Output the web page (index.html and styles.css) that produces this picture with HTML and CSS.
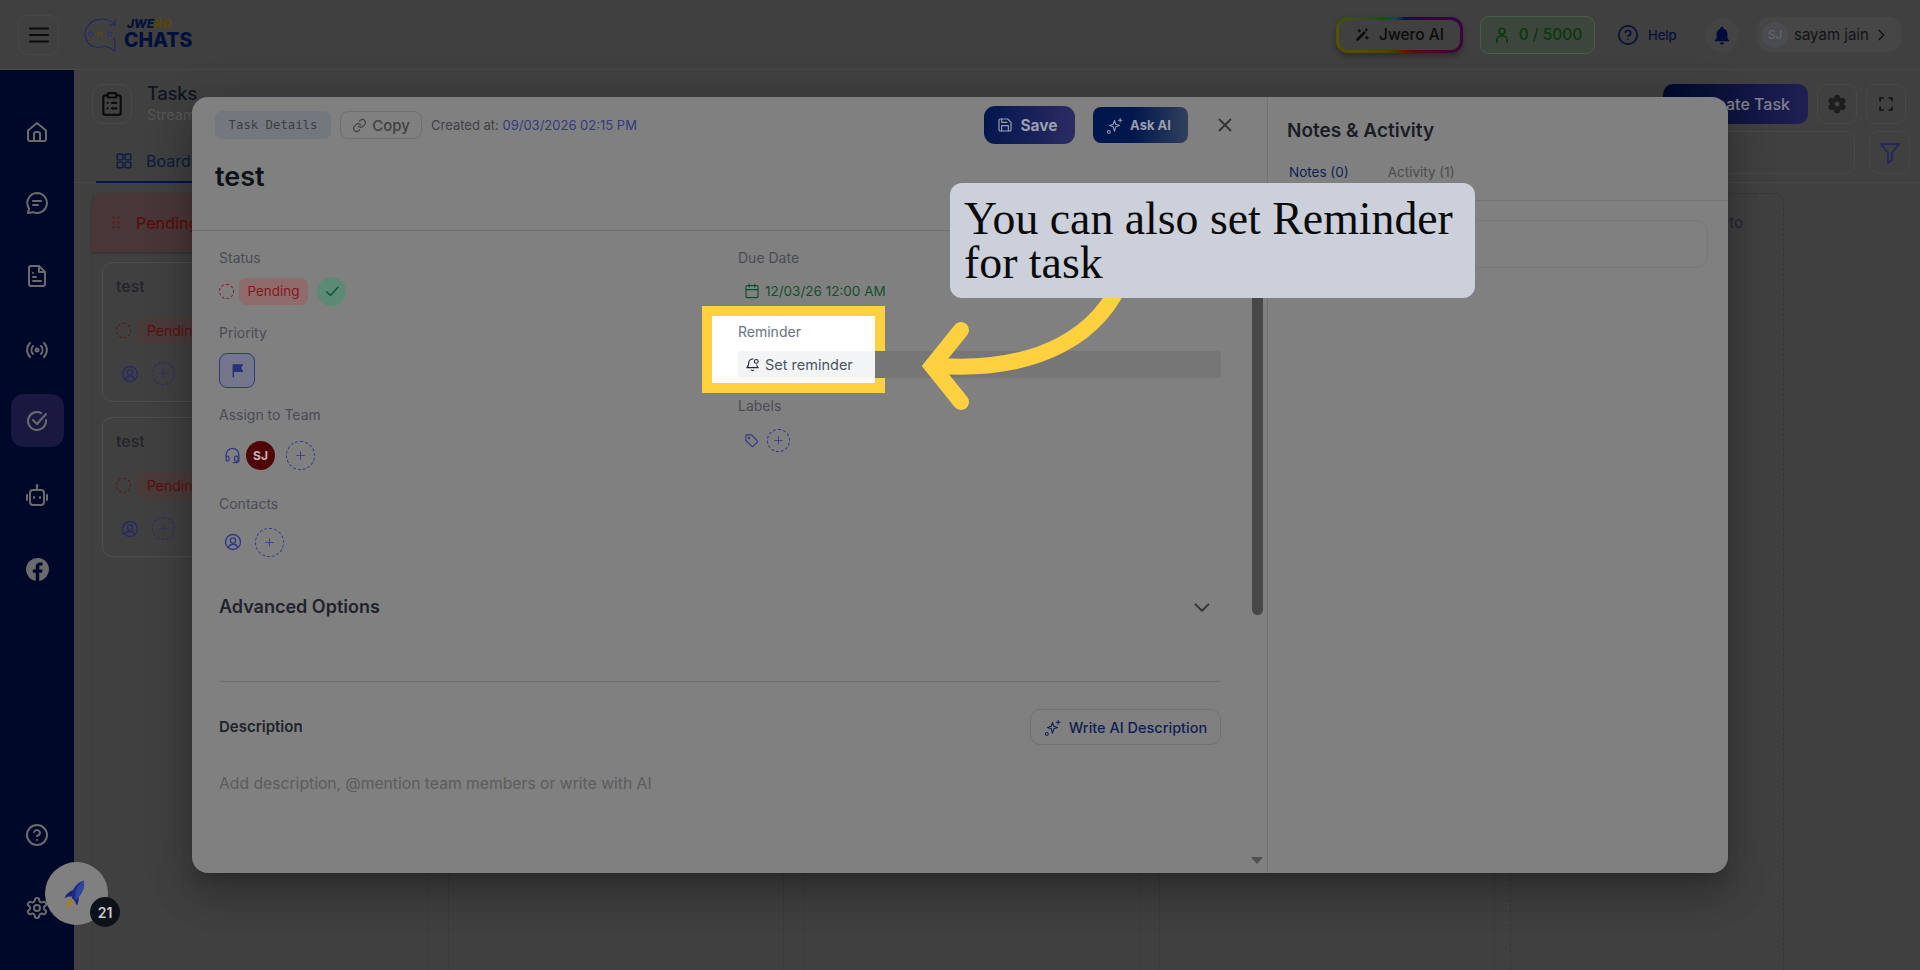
FILE: index.html
```html
<!DOCTYPE html>
<html lang="en">
<head>
<meta charset="utf-8">
<title>Tasks</title>
<link rel="stylesheet" href="styles.css">
</head>
<body>
<svg class="sprite" aria-hidden="true">
  <symbol id="i-sparkle" viewBox="0 0 24 24"><path d="M12 5l1.800 5.200L19 12l-5.200 1.800L12 20l-1.800-6.200L5 12l5.200-1.800z"/><path d="M20 2v5M17.500 4.500h5"/><circle cx="4" cy="21" r="2"/></symbol>
  <symbol id="i-person" viewBox="0 0 24 24"><circle cx="12" cy="12" r="10"/><circle cx="12" cy="10" r="3.500"/><path d="M6 19c1-3 3.500-4 6-4s5 1 6 4"/></symbol>
  <symbol id="i-plus" viewBox="0 0 24 24"><path d="M12 5v14M5 12h14"/></symbol>
  <symbol id="i-gear" viewBox="0 0 24 24"><path d="M12.220 2h-.44a2 2 0 0 0-2 2v.18a2 2 0 0 1-1 1.730l-.43.25a2 2 0 0 1-2 0l-.15-.08a2 2 0 0 0-2.730.73l-.22.38a2 2 0 0 0 .73 2.730l.15.1a2 2 0 0 1 1 1.720v.51a2 2 0 0 1-1 1.740l-.15.09a2 2 0 0 0-.73 2.730l.22.38a2 2 0 0 0 2.730.73l.15-.08a2 2 0 0 1 2 0l.43.25a2 2 0 0 1 1 1.730V20a2 2 0 0 0 2 2h.44a2 2 0 0 0 2-2v-.18a2 2 0 0 1 1-1.730l.43-.25a2 2 0 0 1 2 0l.15.08a2 2 0 0 0 2.730-.73l.22-.39a2 2 0 0 0-.73-2.730l-.15-.08a2 2 0 0 1-1-1.740v-.5a2 2 0 0 1 1-1.740l.15-.09a2 2 0 0 0 .73-2.730l-.22-.38a2 2 0 0 0-2.730-.73l-.15.08a2 2 0 0 1-2 0l-.43-.25a2 2 0 0 1-1-1.730V4a2 2 0 0 0-2-2z"/><circle cx="12" cy="12" r="3"/></symbol>
</svg>

<div class="app">
  <header class="topbar">
    <button class="menu-btn" aria-label="Menu">
      <svg class="icon icon-menu" viewBox="0 0 24 24"><path d="M3 5.500h18M3 12h18M3 18.500h18"/></svg>
    </button>
    <div class="logo">
      <svg class="logo-mark" viewBox="0 0 36 36"><path d="M33 7C29 2.500 23 .8 17 1.500 8 2 1 9 1 17c0 7 5 13 12 14 3 .4 7 0 10-1"/><path d="M33 1v6.500h-6.500"/><path d="M32 21c1 5 1 9 .5 14-2.500-2.500-5-4-9-4.500"/><circle cx="7" cy="17" r="2.200" class="dot-n"/><circle cx="17" cy="17" r="2.200" class="dot-g"/><circle cx="27" cy="17" r="2.200" class="dot-n"/></svg>
      <div class="logo-text">
        <span class="logo-top">JWE<span class="logo-gold">RO</span></span>
        <span class="logo-main">CHATS</span>
      </div>
    </div>
    <div class="top-actions">
      <button class="ai-btn">
        <svg class="icon icon-wand" viewBox="0 0 24 24"><path d="M4 20L15 9" class="thick"/><path d="M7 4v4M5 6h4M18 3v3M16.500 4.500h3M19 15v4M17 17h4"/></svg>
        Jwero AI
      </button>
      <div class="credits">
        <svg class="icon icon-user" viewBox="0 0 24 24"><circle cx="12" cy="7" r="4"/><path d="M5 22v-3a6 6 0 0 1 6-6h2a6 6 0 0 1 6 6v3"/></svg>
        0 / 5000
      </div>
      <div class="help">
        <svg class="icon icon-help" viewBox="0 0 24 24"><circle cx="12" cy="12" r="10"/><path d="M9.100 9a3 3 0 0 1 5.800 1c0 2-3 3-3 3"/><path d="M12 17h.01"/></svg>
        Help
      </div>
      <div class="bell-box">
        <svg class="icon-bell" viewBox="0 0 24 24"><path d="M12 2a2 2 0 0 0-2 2v.6C7 5.500 5.500 8 5.500 11v5L3.500 18.500v1h17v-1L18.500 16v-5c0-3-1.500-5.500-4.500-6.400V4a2 2 0 0 0-2-2z"/><path d="M9.500 21a2.500 2.500 0 0 0 5 0z"/></svg>
      </div>
      <div class="user-pill">
        <span class="user-avatar">SJ</span>
        <span class="user-name">sayam jain</span>
        <svg class="icon icon-chev" viewBox="0 0 24 24"><path d="M9 5l7 7-7 7"/></svg>
      </div>
    </div>
  </header>

  <div class="shell">
    <aside class="sidebar">
      <nav class="nav-main">
        <a class="nav-item"><svg class="icon nav-icon" viewBox="0 0 24 24"><path d="M3 10.500L12 3l9 7.500V19a2 2 0 0 1-2 2H5a2 2 0 0 1-2-2z"/><path d="M9 21v-7a2 2 0 0 1 2-2h2a2 2 0 0 1 2 2v7"/></svg></a>
        <a class="nav-item"><svg class="icon nav-icon" viewBox="0 0 24 24"><path d="M12 2a10 10 0 1 1-4 19.200L3 22l1-4.500A10 10 0 0 1 12 2z"/><path d="M8 10h8M8 14h5"/></svg></a>
        <a class="nav-item"><svg class="icon nav-icon" viewBox="0 0 24 24"><path d="M14 2H6a2 2 0 0 0-2 2v16a2 2 0 0 0 2 2h12a2 2 0 0 0 2-2V8z"/><path d="M14 2v6h6M8 13h3M8 17h8M8 9h0"/></svg></a>
        <a class="nav-item"><svg class="icon nav-icon" viewBox="0 0 24 24"><circle cx="12" cy="12" r="1.500"/><path d="M8 8a6 6 0 0 0 0 8M16 8a6 6 0 0 1 0 8M5 5a10 10 0 0 0 0 14M19 5a10 10 0 0 1 0 14"/></svg></a>
        <a class="nav-item nav-active"><svg class="icon nav-icon" viewBox="0 0 24 24"><path d="M21 11v1a9 9 0 1 1-5-8"/><path d="M8 11l4 4 9-10"/></svg></a>
        <a class="nav-item"><svg class="icon nav-icon" viewBox="0 0 24 24"><path d="M12 7V3"/><circle cx="12" cy="2.500" r=".5"/><rect x="5" y="7" width="14" height="15" rx="3"/><path d="M2 12v5M22 12v5M9 14v1M15 14v1"/></svg></a>
        <a class="nav-item"><svg class="nav-fb" viewBox="0 0 24 24"><path d="M24 12a12 12 0 1 0-13.900 11.900v-8.400H7.100V12h3V9.400c0-3 1.800-4.700 4.500-4.700 1.300 0 2.700.2 2.700.2v3h-1.500c-1.500 0-2 .9-2 1.900V12h3.400l-.5 3.500h-2.900v8.400A12 12 0 0 0 24 12z"/></svg></a>
      </nav>
      <nav class="nav-bottom">
        <a class="nav-item"><svg class="icon nav-icon" viewBox="0 0 24 24"><circle cx="12" cy="12" r="10"/><path d="M9.100 9a3 3 0 0 1 5.800 1c0 2-3 3-3 3"/><path d="M12 17h.01"/></svg></a>
        <a class="nav-item"><svg class="icon nav-icon" viewBox="0 0 24 24"><use href="#i-gear"/></svg></a>
      </nav>
    </aside>

    <main class="content">
      <div class="page-head">
        <div class="page-title-box">
          <span class="page-icon">
            <svg class="icon icon-clip" viewBox="0 0 24 24"><rect x="8" y="2" width="8" height="4" rx="1"/><path d="M16 4h2a2 2 0 0 1 2 2v14a2 2 0 0 1-2 2H6a2 2 0 0 1-2-2V6a2 2 0 0 1 2-2h2M12 11h4M12 16h4M8 11h.01M8 16h.01"/></svg>
          </span>
          <div class="page-title-text">
            <div class="page-title">Tasks</div>
            <div class="page-sub">Stream</div>
          </div>
        </div>
        <div class="page-actions">
          <button class="create-btn">Create Task</button>
          <span class="square-btn"><svg class="icon-solid-gear" viewBox="0 0 24 24"><path d="M12.220 2h-.44a2 2 0 0 0-2 2v.18a2 2 0 0 1-1 1.730l-.43.25a2 2 0 0 1-2 0l-.15-.08a2 2 0 0 0-2.730.73l-.22.38a2 2 0 0 0 .73 2.730l.15.1a2 2 0 0 1 1 1.720v.51a2 2 0 0 1-1 1.740l-.15.09a2 2 0 0 0-.73 2.730l.22.38a2 2 0 0 0 2.730.73l.15-.08a2 2 0 0 1 2 0l.43.25a2 2 0 0 1 1 1.730V20a2 2 0 0 0 2 2h.44a2 2 0 0 0 2-2v-.18a2 2 0 0 1 1-1.730l.43-.25a2 2 0 0 1 2 0l.15.08a2 2 0 0 0 2.730-.73l.22-.39a2 2 0 0 0-.73-2.730l-.15-.08a2 2 0 0 1-1-1.740v-.5a2 2 0 0 1 1-1.740l.15-.09a2 2 0 0 0 .73-2.730l-.22-.38a2 2 0 0 0-2.730-.73l-.15.08a2 2 0 0 1-2 0l-.43-.25a2 2 0 0 1-1-1.730V4a2 2 0 0 0-2-2z"/><circle class="gear-hole" cx="12" cy="12" r="3"/></svg></span>
          <span class="square-btn"><svg class="icon icon-full" viewBox="0 0 24 24"><path d="M4 8V4h4M16 4h4v4M20 16v4h-4M8 20H4v-4"/></svg></span>
        </div>
      </div>
      <div class="tabs-row">
        <div class="board-tab">
          <svg class="icon icon-grid" viewBox="0 0 24 24"><rect x="3" y="3" width="7.500" height="7.500" rx="1"/><rect x="13.500" y="3" width="7.500" height="7.500" rx="1"/><rect x="3" y="13.500" width="7.500" height="7.500" rx="1"/><rect x="13.500" y="13.500" width="7.500" height="7.500" rx="1"/></svg>
          Boards
        </div>
        <div class="tabs-right">
          <div class="search-box"></div>
          <span class="filter-btn"><svg class="icon icon-filter" viewBox="0 0 24 24"><path d="M3 3h18l-7 9v7l-4 3V12z"/></svg></span>
        </div>
      </div>
      <div class="board">
        <section class="column">
          <div class="col-head">
            <svg class="grip" viewBox="0 0 10 16"><circle cx="2" cy="2" r="1.500"/><circle cx="8" cy="2" r="1.500"/><circle cx="2" cy="8" r="1.500"/><circle cx="8" cy="8" r="1.500"/><circle cx="2" cy="14" r="1.500"/><circle cx="8" cy="14" r="1.500"/></svg>
            Pending
          </div>
          <article class="card">
            <div class="card-title">test</div>
            <div class="card-status"><span class="dash-dot"></span><span class="card-chip">Pending</span></div>
            <div class="card-people">
              <svg class="icon icon-person" viewBox="0 0 24 24"><use href="#i-person"/></svg>
              <span class="add-small add-card"><svg class="icon icon-plus" viewBox="0 0 24 24"><use href="#i-plus"/></svg></span>
            </div>
          </article>
          <article class="card">
            <div class="card-title">test</div>
            <div class="card-status"><span class="dash-dot"></span><span class="card-chip">Pending</span></div>
            <div class="card-people">
              <svg class="icon icon-person" viewBox="0 0 24 24"><use href="#i-person"/></svg>
              <span class="add-small add-card"><svg class="icon icon-plus" viewBox="0 0 24 24"><use href="#i-plus"/></svg></span>
            </div>
          </article>
        </section>
        <section class="column"></section>
        <section class="column"></section>
        <section class="column"></section>
        <section class="column column-empty"><div class="empty-note">to</div></section>
      </div>
    </main>
  </div>

  <section class="modal">
    <div class="detail-pane">
      <div class="detail-head">
        <div class="detail-bar">
          <span class="tag-chip">Task Details</span>
          <button class="copy-btn">
            <svg class="icon icon-link" viewBox="0 0 24 24"><path d="M10 13a5 5 0 0 0 7.500.5l3-3a5 5 0 0 0-7-7l-1.700 1.700"/><path d="M14 11a5 5 0 0 0-7.500-.5l-3 3a5 5 0 0 0 7 7l1.700-1.700"/></svg>
            Copy
          </button>
          <span class="created">Created at: <span class="created-date">09/03/2026 02:15 PM</span></span>
          <div class="detail-actions">
            <button class="save-btn">
              <svg class="icon icon-save" viewBox="0 0 24 24"><path d="M5 3h11l5 5v11a2 2 0 0 1-2 2H5a2 2 0 0 1-2-2V5a2 2 0 0 1 2-2z"/><path d="M17 21v-8H7v8M7 3v5h8"/></svg>
              Save
            </button>
            <button class="ask-btn">
              <svg class="icon icon-spark" viewBox="0 0 24 24"><use href="#i-sparkle"/></svg>
              Ask AI
            </button>
            <svg class="icon icon-close" viewBox="0 0 24 24"><path d="M6 6l12 12M18 6L6 18"/></svg>
          </div>
        </div>
        <h1 class="task-title">test</h1>
      </div>

      <div class="fields">
        <div class="field-col">
          <div class="field-label">Status</div>
          <div class="status-row">
            <span class="dash-dot"></span>
            <span class="status-chip">Pending</span>
            <span class="done-btn"><svg class="icon icon-check" viewBox="0 0 24 24"><path d="M5 13l5 5L20 7"/></svg></span>
          </div>
          <div class="field-label label-priority">Priority</div>
          <span class="flag-box"><svg class="icon-flag" viewBox="0 0 24 24"><path d="M5 3h15l-2.500 5L20 14H7v8H5z"/></svg></span>
          <div class="field-label label-team">Assign to Team</div>
          <div class="people-row row-team">
            <svg class="icon icon-headset" viewBox="0 0 24 24"><path d="M3 14v-3a9 9 0 0 1 18 0v8a3 3 0 0 1-3 3h-5"/><rect x="3" y="13" width="4" height="7" rx="2"/><rect x="15" y="13" width="5" height="7" rx="2"/></svg>
            <span class="avatar-sj">SJ</span>
            <span class="add-circle"><svg class="icon icon-plus" viewBox="0 0 24 24"><use href="#i-plus"/></svg></span>
          </div>
          <div class="field-label label-contacts">Contacts</div>
          <div class="people-row row-contacts">
            <svg class="icon icon-contact" viewBox="0 0 24 24"><use href="#i-person"/></svg>
            <span class="add-circle"><svg class="icon icon-plus" viewBox="0 0 24 24"><use href="#i-plus"/></svg></span>
          </div>
        </div>
        <div class="field-col">
          <div class="field-label">Due Date</div>
          <div class="due-row">
            <svg class="icon icon-cal" viewBox="0 0 24 24"><rect x="3" y="4" width="18" height="18" rx="2"/><path d="M8 2v4M16 2v4M3 10h18"/></svg>
            12/03/26 12:00 AM
          </div>
          <div class="reminder-field">
            <div class="field-label reminder-label">Reminder</div>
            <div class="reminder-row">
              <svg class="icon icon-bell-line" viewBox="0 0 24 24"><path d="M13 3.200A6 6 0 0 0 6 9c0 5-3 8-3 8h18s-1.300-1.400-2.200-4"/><path d="M10.500 21a2 2 0 0 0 3 0"/><circle cx="18" cy="7" r="3"/></svg>
              Set reminder
            </div>
          </div>
          <div class="field-label label-labels">Labels</div>
          <div class="labels-row">
            <svg class="icon icon-tag" viewBox="0 0 24 24"><path d="M3 4a1 1 0 0 1 1-1h8l9 9a2 2 0 0 1 0 2.800L14.800 21a2 2 0 0 1-2.800 0l-9-9z"/><circle cx="8" cy="8" r="1"/></svg>
            <span class="add-small add-label"><svg class="icon icon-plus" viewBox="0 0 24 24"><use href="#i-plus"/></svg></span>
          </div>
        </div>
      </div>

      <div class="advanced">
        <span>Advanced Options</span>
        <svg class="icon icon-down" viewBox="0 0 24 24"><path d="M5 8l7 7 7-7"/></svg>
      </div>
      <div class="desc-head">
        <span class="desc-label">Description</span>
        <button class="write-btn">
          <svg class="icon icon-spark" viewBox="0 0 24 24"><use href="#i-sparkle"/></svg>
          Write AI Description
        </button>
      </div>
      <p class="desc-placeholder">Add description, @mention team members or write with AI</p>
      <div class="scroll-thumb"></div>
      <div class="scroll-arrow"></div>
    </div>

    <div class="notes-pane">
      <h2 class="notes-title">Notes &amp; Activity</h2>
      <div class="notes-tabs">
        <span class="notes-tab notes-tab-on">Notes (0)</span>
        <span class="notes-tab">Activity (1)</span>
      </div>
      <div class="notes-body">
        <div class="notes-input"></div>
      </div>
    </div>
  </section>

  <div class="fab">
    <svg class="rocket" viewBox="0 0 24 32">
      <path class="rocket-fin" d="M11 10C6 12 2 15 .5 19.500 4 17.500 6 17 8 18z"/>
      <path class="rocket-fin" d="M16 17c.5 4-.5 8-2 10.500-1-2-1.500-4-3-5.500z"/>
      <path class="rocket-body" d="M21.500.5C15 2 11 7 9 13c-1 3-1 5 0 7l3 2c3-2 6-6 7.500-9C22 9 22.500 5 21.500.5z"/>
      <path class="rocket-light" d="M21.500.5C17 3 14 8 13 13c-.5 3-.5 6-1 9 3-2 6-6 7.500-9C22 9 22.500 5 21.500.5z"/>
      <path class="rocket-flame" d="M6 21c2.500.5 3.500 2 3.500 3-1 3-3.500 5.500-6.500 6.500-.5-3.500.5-7 3-9.500z"/>
    </svg>
    <span class="fab-badge">21</span>
  </div>

  <svg class="guide-arrow" viewBox="0 0 300 200">
    <path d="M214 10C192 70 130 108 30 102" />
    <path d="M51 66L22 102l29 36" />
  </svg>
  <div class="callout">You can also set Reminder for task</div>
</div>
</body>
</html>
```

FILE: styles.css
```css
* { box-sizing: border-box; }
html, body { margin: 0; height: 100%; }
body { font-family: Inter, "Noto Sans", sans-serif; background: #404040; overflow: hidden; }
button { font-family: inherit; padding: 0; border: 0; background: none; }
h1, h2, p { margin: 0; }
.sprite { display: none; }
.icon { fill: none; stroke: currentColor; stroke-width: 2; stroke-linecap: round; stroke-linejoin: round; flex: none; display: block; }

.app { position: relative; width: 1920px; height: 970px; overflow: hidden; display: flex; flex-direction: column; }

/* top bar */
.topbar { height: 70px; flex: none; display: flex; align-items: center; border-bottom: 1px solid #484848; padding: 0 19px 0 18px; }
.menu-btn { width: 41px; height: 40px; border: 1px solid #484848; border-radius: 10px; display: flex; align-items: center; justify-content: center; color: #0b0b0b; }
.icon-menu { width: 24px; height: 24px; }
.logo { display: flex; align-items: center; margin-left: 25px; gap: 6px; }
.logo-mark { width: 34px; height: 34px; fill: none; stroke: #23285e; stroke-width: 1.200; }
.logo-mark .dot-n { stroke: #2c2f68; }
.logo-mark .dot-g { stroke: #5e4a12; }
.logo-text { display: flex; flex-direction: column; line-height: 1; margin-top: -1px; }
.logo-top { font: italic 800 12px/13px Inter, sans-serif; color: #00103c; margin-left: 3px; }
.logo-gold { color: #5c4408; }
.logo-main { font: 800 19.500px/21px Inter, sans-serif; color: #00103a; }
.top-actions { margin-left: auto; display: flex; align-items: center; }
.ai-btn { width: 127px; height: 36px; border: 3px solid transparent; border-radius: 12px; background: linear-gradient(#404040, #404040) padding-box, conic-gradient(from 270deg, #545400, #184e10 12%, #0a4a54 22%, #0e0e54 30%, #300054 42%, #400832 55%, #5c1700 68%, #504000 85%, #545400) border-box; box-shadow: 0 3px 6px rgba(0,0,0,.35); display: flex; align-items: center; justify-content: center; gap: 9px; font-size: 15.500px; font-weight: 500; color: #0b0b0b; }
.icon-wand { width: 15px; height: 15px; stroke-width: 2; }
.icon-wand .thick { stroke-width: 4; }
.credits { width: 115px; height: 38px; margin-left: 17px; border: 1px solid #4a5c4a; border-radius: 9px; background: #3c463c; display: flex; align-items: center; justify-content: center; gap: 8px; font-size: 15.500px; font-weight: 500; color: #0a380a; }
.icon-user { width: 18px; height: 18px; }
.help { display: flex; align-items: center; gap: 9px; margin-left: 22px; font-size: 13px; font-weight: 500; color: #060f3c; width: 60px; }
.icon-help { width: 22px; height: 22px; stroke-width: 1.800; }
.bell-box { width: 34px; height: 34px; margin-left: 28px; display: flex; align-items: center; justify-content: center; border-radius: 50%; background: #444444; }
.icon-bell { width: 20px; height: 20px; fill: #000c3c; }
.user-pill { width: 144px; height: 35px; margin-left: 18px; border-radius: 12px; background: #464646; display: flex; align-items: center; padding-left: 5px; }
.user-avatar { width: 26px; height: 26px; border-radius: 50%; background: #4a4c52; color: #686868; font-size: 12px; display: flex; align-items: center; justify-content: center; }
.user-name { margin-left: 6px; font-size: 15px; color: #131316; }
.icon-chev { width: 16px; height: 16px; margin-left: 4px; color: #141414; }

/* shell */
.shell { flex: 1; display: flex; min-height: 0; }
.sidebar { width: 74px; flex: none; background: #00082a; display: flex; flex-direction: column; justify-content: space-between; padding: 35px 0 36px; }
.nav-main, .nav-bottom { display: flex; flex-direction: column; align-items: center; }
.nav-item { width: 53px; height: 53px; display: flex; align-items: center; justify-content: center; border-radius: 13px; color: #6b6b6b; }
.nav-main .nav-item:nth-child(2) { margin-top: 18px; }
.nav-main .nav-item:nth-child(3) { margin-top: 20px; }
.nav-main .nav-item:nth-child(4) { margin-top: 21px; }
.nav-main .nav-item:nth-child(5) { margin-top: 18px; }
.nav-main .nav-item:nth-child(6) { margin-top: 21px; }
.nav-main .nav-item:nth-child(7) { margin-top: 22px; }
.nav-bottom .nav-item + .nav-item { margin-top: 20px; }
.nav-active { background: #181840; }
.nav-icon { width: 24px; height: 24px; }
.nav-fb { width: 23px; height: 23px; fill: #6b6b6b; }

/* content */
.content { flex: 1; min-width: 0; display: flex; flex-direction: column; }
.page-head { height: 54px; flex: none; padding: 14px 14px 0 18px; display: flex; justify-content: space-between; }
.page-title-box { display: flex; gap: 15px; }
.page-icon { width: 40px; height: 40px; border: 1px solid #484848; border-radius: 10px; display: flex; align-items: center; justify-content: center; color: #0c0c0c; }
.icon-clip { width: 26px; height: 26px; }
.page-title-text { margin-top: -2px; }
.page-title { font-size: 18px; font-weight: 500; line-height: 24px; color: #10141f; }
.page-sub { font-size: 14.500px; line-height: 20px; margin-top: -1px; color: #555; white-space: nowrap; }
.page-actions { display: flex; gap: 9px; }
.create-btn { width: 145px; height: 40px; padding-right: 18px; border-radius: 10px; background: linear-gradient(90deg, #000a2c, #1f1f54); color: #80808a; font-size: 16px; font-weight: 500; text-align: right; }
.square-btn { width: 40px; height: 40px; border: 1px solid #484848; border-radius: 10px; display: flex; align-items: center; justify-content: center; }
.icon-solid-gear { width: 20px; height: 20px; fill: #1e1e1e; stroke: #1e1e1e; stroke-width: 2.500; stroke-linejoin: round; }
.gear-hole { fill: #404040; stroke-width: 0; }
.icon-full { width: 18px; height: 18px; color: #0e0e0e; }
.tabs-row { height: 59px; flex: none; border-bottom: 1px solid #484848; display: flex; justify-content: space-between; padding: 7px 10px 0 22px; }
.board-tab { width: 180px; height: 52px; border-bottom: 2px solid #00154c; display: flex; align-items: center; gap: 13px; padding: 10px 0 0 19px; font-size: 16px; color: #0f1a3c; }
.icon-grid { width: 18px; height: 18px; color: #0b184a; stroke-width: 1.800; }
.tabs-right { display: flex; gap: 14px; }
.search-box { width: 400px; height: 43px; border: 1px solid #484848; border-radius: 10px; }
.filter-btn { width: 41px; height: 43px; border: 1px solid #484848; border-radius: 10px; display: flex; align-items: center; justify-content: center; color: #23265a; }
.icon-filter { width: 24px; height: 24px; stroke-width: 1.800; }

.board { flex: 1; display: flex; gap: 19px; padding: 10px 0 0 18px; min-height: 0; }
.column { width: 336.500px; flex: none; border-left: 1px solid #383c3a; border-right: 1px solid #383c3a; }
.column-empty { width: 274px; margin-left: -4px; border: 0; }
.empty-note { height: 100%; border: 1px dashed #363636; border-bottom: 0; border-radius: 10px 10px 0 0; padding-top: 19px; text-align: right; padding-right: 40px; font-size: 15px; font-weight: 500; color: #2a2a32; }
.col-head { height: 59px; margin-left: -1px; background: #483736; border-radius: 10px 10px 0 0; display: flex; align-items: center; gap: 16px; padding-left: 20px; font-size: 16px; font-weight: 500; color: #5c0e0e; box-shadow: 0 1px 3px rgba(0,0,0,.3); }
.grip { width: 8px; height: 13px; fill: #5a1c1c; }
.card { height: 140px; margin: 10px 0 0 9px; width: 330px; border: 1px solid #4e4e4e; border-radius: 10px; padding: 13px 13px; }
.card + .card { margin-top: 15px; }
.card-title { font-size: 16px; font-weight: 500; line-height: 20px; color: #24242c; }
.card-status { display: flex; align-items: center; gap: 6px; margin-top: 21px; }
.dash-dot { width: 15px; height: 15px; flex: none; border: 1.500px dashed #8a141c; border-radius: 50%; }
.card .dash-dot { border-color: #601212; }
.card-chip { height: 27px; padding: 0 10px; line-height: 27px; background: #4a3b3b; border-radius: 8px; font-size: 14px; color: #5c1010; }
.card-people { display: flex; align-items: center; gap: 13px; margin-top: 18px; padding-left: 5px; }
.icon-person { width: 18px; height: 18px; color: #262a66; stroke-width: 1.800; }
.add-small { width: 23px; height: 23px; border: 1px dashed #2a2e6c; border-radius: 50%; display: flex; align-items: center; justify-content: center; }
.add-card { color: #2c3064; }
.icon-plus { width: 13px; height: 13px; stroke-width: 1.500; }

/* modal */
.modal { position: absolute; left: 192px; top: 97px; width: 1536px; height: 776px; background: #808080; border-radius: 16px; overflow: hidden; display: flex; box-shadow: 0 11px 15px -7px rgba(0,0,0,.2), 0 24px 38px 3px rgba(0,0,0,.14), 0 9px 46px 8px rgba(0,0,0,.12); }
.detail-pane { position: relative; width: 1076px; flex: none; border-right: 1px solid #737373; }
.detail-head { height: 134px; border-bottom: 1px solid #707070; padding: 9px 31px 0 23px; }
.detail-bar { height: 38px; display: flex; align-items: center; }
.tag-chip { width: 116px; height: 28px; border-radius: 7px; background: #74787e; color: #3a3e44; font: 12.300px/28px "DejaVu Sans Mono", monospace; text-align: center; }
.copy-btn { width: 82px; height: 28px; margin-left: 9px; border: 1px solid #707070; border-radius: 8px; display: flex; align-items: center; justify-content: center; gap: 5px; font-size: 15px; font-weight: 500; color: #404040; }
.icon-link { width: 15px; height: 15px; stroke-width: 1.800; }
.created { margin-left: 9px; font-size: 13px; color: #404148; }
.created-date { color: #333a7c; }
.detail-actions { margin-left: auto; display: flex; align-items: center; }
.save-btn { width: 91px; height: 38px; border-radius: 11px; background: linear-gradient(90deg, #02164e, #2c2c62); color: #9a9eae; font-size: 15.500px; font-weight: 700; display: flex; align-items: center; justify-content: center; gap: 7px; padding-right: 4px; }
.icon-save { width: 16px; height: 16px; stroke-width: 1.800; }
.ask-btn { width: 95px; height: 36px; margin-left: 18px; border-radius: 8px; background: linear-gradient(90deg, #00164c 40%, #30405c); color: #9a9eae; font-size: 13px; font-weight: 700; display: flex; align-items: center; justify-content: center; gap: 7px; padding-right: 4px; }
.icon-spark { width: 17px; height: 17px; stroke-width: 1.500; }
.icon-close { width: 22px; height: 22px; margin-left: 26px; color: #333; }
.task-title { font-size: 27px; font-weight: 600; line-height: 34px; margin-top: 16px; color: #0e1118; }

.fields { display: grid; grid-template-columns: 519px 483px; padding: 18px 0 0 27px; }
.field-label { font-size: 14px; line-height: 18px; color: #4a4c54; }
.status-row { height: 28px; margin-top: 10px; display: flex; align-items: center; }
.status-chip { height: 27px; width: 69px; margin-left: 5px; border-radius: 7px; background: #8f6c6c; color: #8a1420; font-size: 13.500px; line-height: 27px; text-align: center; }
.done-btn { width: 29px; height: 29px; margin-left: 9px; border-radius: 50%; background: #5c8a74; color: #0a5a3c; display: flex; align-items: center; justify-content: center; }
.icon-check { width: 18px; height: 18px; }
.label-priority { margin-top: 19px; }
.flag-box { width: 36px; height: 35px; margin-top: 11px; border: 1.500px solid #303888; border-radius: 8px; background: #74778a; display: flex; align-items: center; justify-content: center; }
.icon-flag { width: 17px; height: 17px; fill: #27307c; }
.label-team { margin-top: 18px; }
.people-row { display: flex; align-items: center; height: 30px; }
.row-team { margin-top: 16px; padding-left: 5px; }
.icon-headset { width: 17px; height: 17px; color: #303888; stroke-width: 1.800; }
.avatar-sj { width: 29px; height: 29px; margin-left: 5px; border-radius: 50%; background: #4e0606; color: #c4b4b4; font-size: 12px; font-weight: 700; display: flex; align-items: center; justify-content: center; }
.add-circle { width: 29px; height: 29px; margin-left: 11px; border: 1px dashed #303888; border-radius: 50%; color: #303888; display: flex; align-items: center; justify-content: center; }
.label-contacts { margin-top: 25px; }
.row-contacts { margin-top: 14px; padding-left: 5px; }
.icon-contact { width: 18px; height: 18px; color: #303888; stroke-width: 1.800; }
.row-contacts .add-circle { margin-left: 13px; }
.due-row { height: 28px; margin-top: 10px; display: flex; align-items: center; gap: 5px; padding-left: 6px; font-size: 13.500px; color: #10502e; }
.icon-cal { width: 16px; height: 16px; stroke-width: 1.800; }

.reminder-field { position: relative; margin-top: 18px; z-index: 0; }
.reminder-field::before { content: ""; position: absolute; z-index: -1; left: -36px; top: -17px; width: 183px; height: 87px; border: 10px solid #ffd040; background: #fff; box-sizing: border-box; }
.reminder-label { color: #6b7280; }
.reminder-row { height: 27px; margin-top: 10px; border-radius: 4px; background: linear-gradient(90deg, #f3f4f6 137px, #767676 137px); display: flex; align-items: center; gap: 5px; padding-left: 7px; font-size: 14.500px; color: #4b5563; }
.icon-bell-line { width: 15px; height: 15px; color: #1f2937; stroke-width: 1.800; }
.label-labels { margin-top: 19px; }
.labels-row { height: 28px; margin-top: 11px; display: flex; align-items: center; padding-left: 6px; }
.icon-tag { width: 15px; height: 15px; color: #303888; stroke-width: 1.800; }
.add-label { margin-left: 8px; border-color: #303888; color: #303888; }

.advanced { height: 24px; margin: 37px 46px 0 27px; display: flex; align-items: center; justify-content: space-between; padding-right: 8px; font-size: 18px; font-weight: 600; color: #20232c; }
.icon-down { width: 22px; height: 22px; margin-top: 3px; color: #333; }
.desc-head { margin: 63px 46px 0 27px; padding-top: 27px; border-top: 1px solid #707070; display: flex; align-items: center; justify-content: space-between; font-size: 15px; font-weight: 600; color: #1f222a; }
.desc-label { margin-bottom: 2px; }
.write-btn { width: 191px; height: 36px; border: 1px solid #727272; border-radius: 10px; display: flex; align-items: center; justify-content: center; gap: 8px; font-size: 14.500px; font-weight: 500; color: #0f1e55; }
.desc-placeholder { margin: 29px 0 0 27px; font-size: 15.700px; line-height: 20px; color: #5c5c5c; }
.scroll-thumb { position: absolute; left: 1060px; top: 143px; width: 11px; height: 375px; background: #474747; border-radius: 6px; }
.scroll-arrow { position: absolute; left: 1059px; top: 760px; border: 6.500px solid transparent; border-top: 7px solid #505050; border-bottom: 0; }

.notes-pane { flex: 1; min-width: 0; }
.notes-title { font-size: 19px; font-weight: 600; line-height: 24px; margin: 22px 0 0 19px; color: #1a1d26; }
.notes-tabs { height: 51px; margin-top: 7px; border-bottom: 1px solid #737373; display: flex; align-items: center; gap: 39px; padding: 0 0 7px 21px; font-size: 13.500px; color: #4c4c4c; }
.notes-tab-on { color: #0f1e55; }
.notes-body { padding: 19px 20px 0 19px; }
.notes-input { height: 48px; border: 1px solid #797979; border-radius: 12px; }

/* floating */
.fab { position: absolute; left: 45px; top: 862px; width: 63px; height: 63px; border-radius: 50%; background: #808080; display: flex; align-items: center; justify-content: center; }
.rocket { width: 22px; height: 30px; margin: 2px 3px 0 0; }
.rocket-flame { fill: #a87c20; }
.rocket-fin { fill: #1a2470; }
.rocket-body { fill: #1e2c88; }
.rocket-light { fill: #2f46a0; }
.fab-badge { position: absolute; left: 45px; top: 35px; width: 30px; height: 30px; border-radius: 50%; background: #0c111a; color: #c8ccd0; font-size: 14px; font-weight: 600; display: flex; align-items: center; justify-content: center; }
.guide-arrow { position: absolute; left: 910px; top: 264px; width: 300px; height: 200px; fill: none; stroke: #ffd040; stroke-width: 16; stroke-linecap: round; stroke-linejoin: miter; }
.callout { position: absolute; left: 950px; top: 183px; width: 525px; height: 115px; padding: 14px 14px 0; background: #cbd0da; border-radius: 12px; font: 45.800px/44px "Liberation Serif", serif; color: #0a0a0a; }
```
